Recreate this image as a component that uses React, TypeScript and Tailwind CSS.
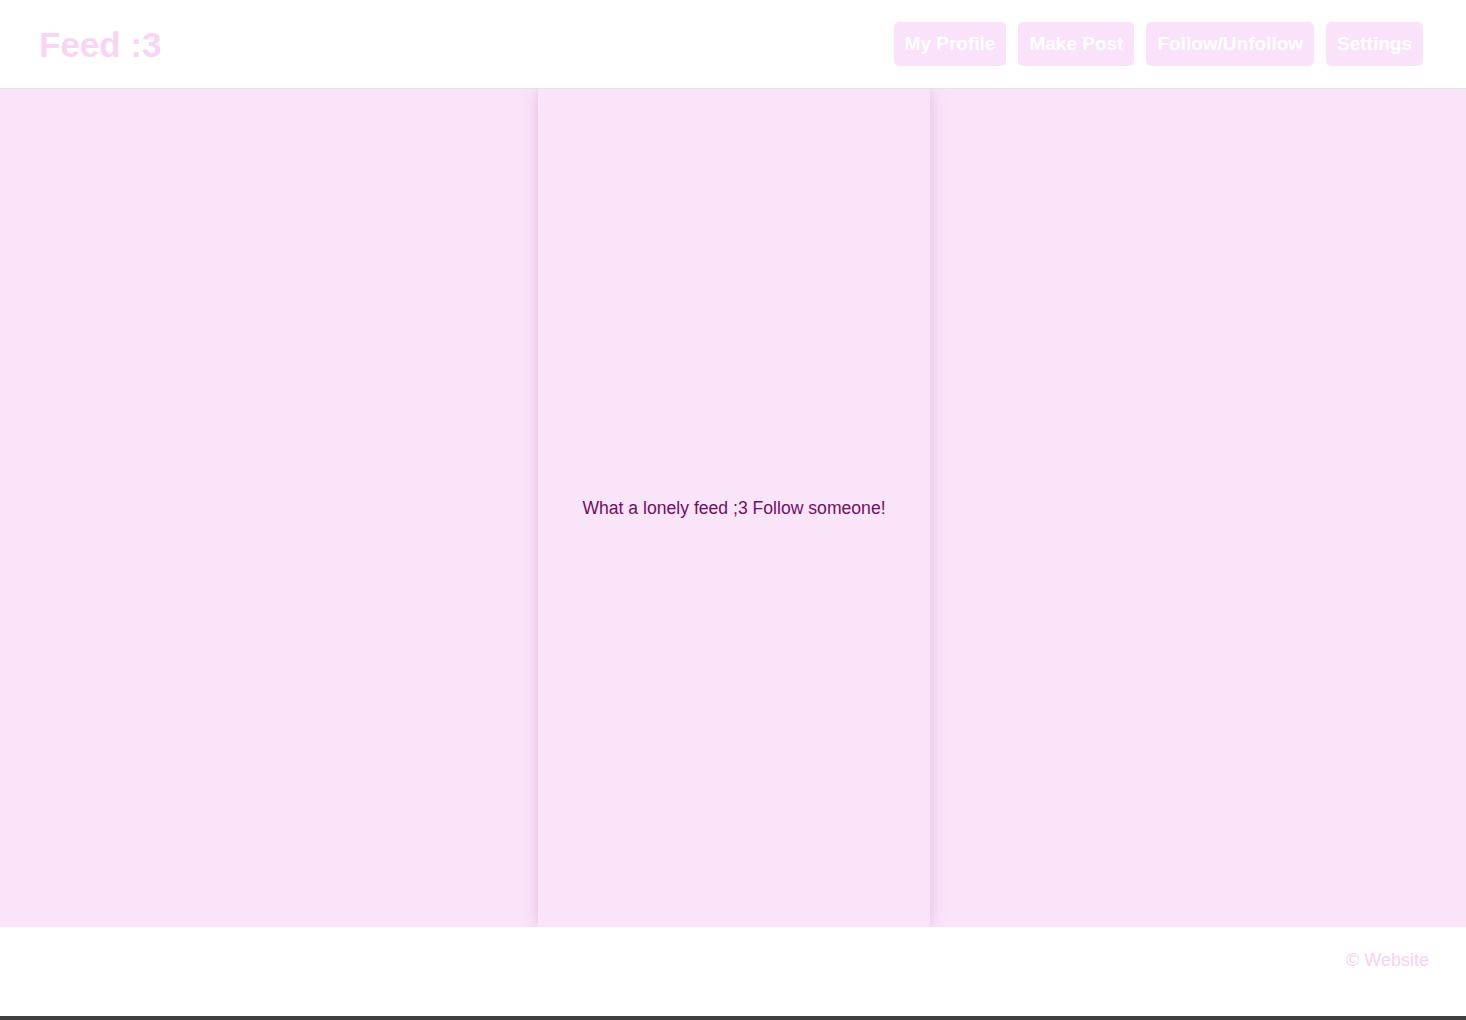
import React from 'react';

const links = ['My Profile', 'Make Post', 'Follow/Unfollow', 'Settings'];

export default function App() {
  return (
    <div className="flex h-[1020px] flex-col bg-white font-['Liberation_Sans',Arial,sans-serif]">
      {/* Header */}
      <header className="flex h-[89px] shrink-0 items-center justify-between border-b border-[#e4e4e4] pl-[39px] pr-[43px]">
        <h1 className="text-[35px] font-bold leading-none text-[#f9d4f5]">Feed :3</h1>
        <nav className="flex gap-[12px]">
          {links.map(l => (
            <button
              key={l}
              className="h-[44px] rounded-[5px] bg-[#fae3fa] px-[11px] text-[19px] font-bold text-white"
            >
              {l}
            </button>
          ))}
        </nav>
      </header>

      {/* Feed */}
      <main className="flex h-[838px] shrink-0 justify-center overflow-hidden bg-[#fae4fa] pl-[2px]">
        <section className="flex w-[392px] items-center justify-center bg-[#fae4fa] shadow-[0_0_14px_rgba(170,90,160,0.28)]">
          <p className="text-[17.6px] text-[#6e0f60]">What a lonely feed ;3 Follow someone!</p>
        </section>
      </main>

      {/* Footer */}
      <footer className="flex flex-1 items-start justify-end border-b-4 border-[#404040] pr-[37px] pt-[20px]">
        <span className="text-[18px] text-[#f8d0f4]">© Website</span>
      </footer>
    </div>
  );
}
